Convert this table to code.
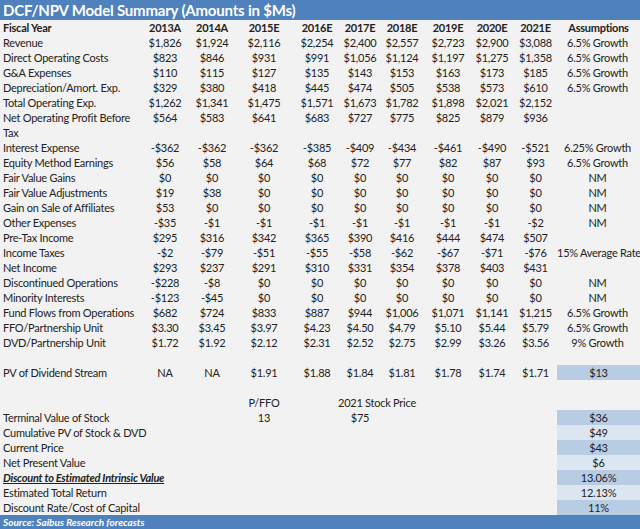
import React from "react";

const gridCols = "grid grid-cols-[142px_46px_48px_56px_50px_36px_48px_44px_44px_43px_83px]";
const rowClass = `${gridCols} h-[15px] leading-[15px] whitespace-nowrap`;

// label, 9 yearly values, assumption
const rows = [
  ["Revenue", "$1,826", "$1,924", "$2,116", "$2,254", "$2,400", "$2,557", "$2,723", "$2,900", "$3,088", "6.5% Growth"],
  ["Direct Operating Costs", "$823", "$846", "$931", "$991", "$1,056", "$1,124", "$1,197", "$1,275", "$1,358", "6.5% Growth"],
  ["G&A Expenses", "$110", "$115", "$127", "$135", "$143", "$153", "$163", "$173", "$185", "6.5% Growth"],
  ["Depreciation/Amort. Exp.", "$329", "$380", "$418", "$445", "$474", "$505", "$538", "$573", "$610", "6.5% Growth"],
  ["Total Operating Exp.", "$1,262", "$1,341", "$1,475", "$1,571", "$1,673", "$1,782", "$1,898", "$2,021", "$2,152", ""],
  ["Net Operating Profit Before", "$564", "$583", "$641", "$683", "$727", "$775", "$825", "$879", "$936", ""],
  ["Tax", "", "", "", "", "", "", "", "", "", ""],
  ["Interest Expense", "-$362", "-$362", "-$362", "-$385", "-$409", "-$434", "-$461", "-$490", "-$521", "6.25% Growth"],
  ["Equity Method Earnings", "$56", "$58", "$64", "$68", "$72", "$77", "$82", "$87", "$93", "6.5% Growth"],
  ["Fair Value Gains", "$0", "$0", "$0", "$0", "$0", "$0", "$0", "$0", "$0", "NM"],
  ["Fair Value Adjustments", "$19", "$38", "$0", "$0", "$0", "$0", "$0", "$0", "$0", "NM"],
  ["Gain on Sale of Affiliates", "$53", "$0", "$0", "$0", "$0", "$0", "$0", "$0", "$0", "NM"],
  ["Other Expenses", "-$35", "-$1", "-$1", "-$1", "-$1", "-$1", "-$1", "-$1", "-$2", "NM"],
  ["Pre-Tax Income", "$295", "$316", "$342", "$365", "$390", "$416", "$444", "$474", "$507", ""],
  ["Income Taxes", "-$2", "-$79", "-$51", "-$55", "-$58", "-$62", "-$67", "-$71", "-$76", "15% Average Rate"],
  ["Net Income", "$293", "$237", "$291", "$310", "$331", "$354", "$378", "$403", "$431", ""],
  ["Discontinued Operations", "-$228", "-$8", "$0", "$0", "$0", "$0", "$0", "$0", "$0", "NM"],
  ["Minority Interests", "-$123", "-$45", "$0", "$0", "$0", "$0", "$0", "$0", "$0", "NM"],
  ["Fund Flows from Operations", "$682", "$724", "$833", "$887", "$944", "$1,006", "$1,071", "$1,141", "$1,215", "6.5% Growth"],
  ["FFO/Partnership Unit", "$3.30", "$3.45", "$3.97", "$4.23", "$4.50", "$4.79", "$5.10", "$5.44", "$5.79", "6.5% Growth"],
  ["DVD/Partnership Unit", "$1.72", "$1.92", "$2.12", "$2.31", "$2.52", "$2.75", "$2.99", "$3.26", "$3.56", "9% Growth"],
];

const years = ["2013A", "2014A", "2015E", "2016E", "2017E", "2018E", "2019E", "2020E", "2021E"];

const summary = [
  ["Terminal Value of Stock", "$36", "dark"],
  ["Cumulative PV of Stock & DVD", "$49", "light"],
  ["Current Price", "$43", "dark"],
  ["Net Present Value", "$6", "light"],
  ["Discount to Estimated Intrinsic Value", "13.06%", "dark"],
  ["Estimated Total Return", "12.13%", "light"],
  ["Discount Rate/Cost of Capital", "11%", "dark"],
];

function DataRow({ row }) {
  const [label, ...rest] = row;
  const values = rest.slice(0, 9);
  const assumption = rest[9];
  return (
    <div className={rowClass}>
      <div className="pl-[3px]">{label}</div>
      {values.map((v, i) => (
        <div key={i} className="text-center">{v}</div>
      ))}
      <div className="text-center pr-[2px]">{assumption}</div>
    </div>
  );
}

function SummaryRow({ label, value, shade, index }) {
  const isKey = label.startsWith("Discount to");
  const bg = shade === "dark" ? "bg-[#b8cce4]" : "bg-[#dce6f1]";
  if (index === 0) {
    return (
      <div className={rowClass}>
        <div className="col-span-3 pl-[3px]">{label}</div>
        <div className="text-center">13</div>
        <div />
        <div className="text-center">$75</div>
        <div className="col-span-4" />
        <div className={`text-center ${bg}`}>{value}</div>
      </div>
    );
  }
  return (
    <div className={rowClass}>
      <div className={`col-span-10 pl-[3px] ${isKey ? "font-bold italic underline" : ""}`}>{label}</div>
      <div className={`text-center ${bg}`}>{value}</div>
    </div>
  );
}

export default function App() {
  return (
    <div className="w-[640px] h-[529px] bg-[#f2f2f2] text-[#222222] text-[11px] tracking-[-0.25px] font-['Lato',sans-serif] overflow-hidden">
      <div className="h-[20px] bg-[#4f81bd] text-white font-bold text-[15px] tracking-[-0.2px] leading-[20px] pl-[3px]">
        DCF/NPV Model Summary (Amounts in $Ms)
      </div>

      <div className={`${rowClass} font-bold`}>
        <div className="pl-[3px]">Fiscal Year</div>
        {years.map((y) => (
          <div key={y} className="text-center">{y}</div>
        ))}
        <div className="text-center">Assumptions</div>
      </div>

      {rows.map((row, i) => (
        <DataRow key={i} row={row} />
      ))}

      <div className="h-[15px]" />

      <div className={rowClass}>
        <div className="pl-[3px]">PV of Dividend Stream</div>
        {["NA", "NA", "$1.91", "$1.88", "$1.84", "$1.81", "$1.78", "$1.74", "$1.71"].map((v, i) => (
          <div key={i} className="text-center">{v}</div>
        ))}
        <div className="text-center bg-[#b8cce4]">$13</div>
      </div>

      <div className="h-[15px]" />

      <div className={rowClass}>
        <div />
        <div />
        <div />
        <div className="text-center">P/FFO</div>
        <div />
        <div className="-ml-[4px]">2021 Stock Price</div>
      </div>

      {summary.map(([label, value, shade], i) => (
        <SummaryRow key={i} label={label} value={value} shade={shade} index={i} />
      ))}

      <div className="h-[14px] bg-[#4f81bd] text-white font-bold italic text-[10px] tracking-normal leading-[14px] pl-[3px]">
        Source: Saibus Research forecasts
      </div>
    </div>
  );
}
